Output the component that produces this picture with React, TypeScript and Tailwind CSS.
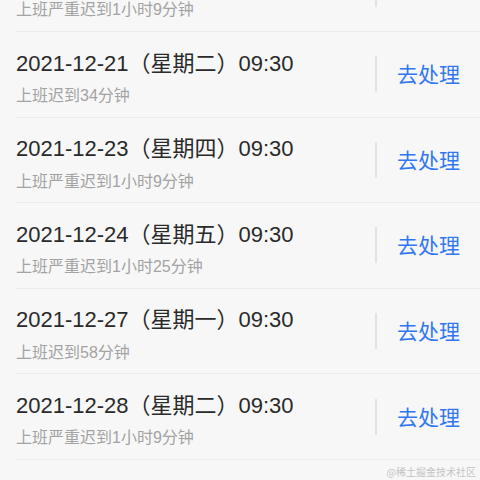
import React from "react";

const rows = [
  { date: "2021-12-20（星期一）09:30", note: "上班严重迟到1小时9分钟" },
  { date: "2021-12-21（星期二）09:30", note: "上班迟到34分钟" },
  { date: "2021-12-23（星期四）09:30", note: "上班严重迟到1小时9分钟" },
  { date: "2021-12-24（星期五）09:30", note: "上班严重迟到1小时25分钟" },
  { date: "2021-12-27（星期一）09:30", note: "上班迟到58分钟" },
  { date: "2021-12-28（星期二）09:30", note: "上班严重迟到1小时9分钟" },
];

export default function App() {
  return (
    <div
      className="relative h-[480px] w-[480px] overflow-hidden bg-[#f7f7f7]"
      style={{ fontFamily: '"Liberation Sans", "Noto Sans CJK SC", sans-serif' }}
    >
      <div className="mt-[-53.6px] flex flex-col pl-4">
        {rows.map((r, i) => (
          <div
            key={i}
            className="flex h-[85.6px] shrink-0 items-center border-b border-[#ebebeb]"
          >
            <div className="flex h-full flex-1 flex-col pt-[16.5px]">
              <div className="text-[22px] leading-[30px] text-[#2a2a2a] whitespace-nowrap">
                {r.date}
              </div>
              <div className="mt-[7.5px] text-[16px] leading-[20px] text-[#a3a3a3] whitespace-nowrap">
                {r.note}
              </div>
            </div>
            <div className="h-[36px] w-[2px] bg-[#e3e3e3]" />
            <div className="ml-[20px] mr-5 pt-[2px] text-[21px] leading-[28px] text-[#3277f2]">
              去处理
            </div>
          </div>
        ))}
      </div>
      <div
        className="absolute bottom-[3px] right-[4px] text-[10px] leading-none text-[#c4c4c4]"
        style={{ fontFamily: '"Noto Sans CJK SC", sans-serif' }}
      >
        @稀土掘金技术社区
      </div>
    </div>
  );
}
